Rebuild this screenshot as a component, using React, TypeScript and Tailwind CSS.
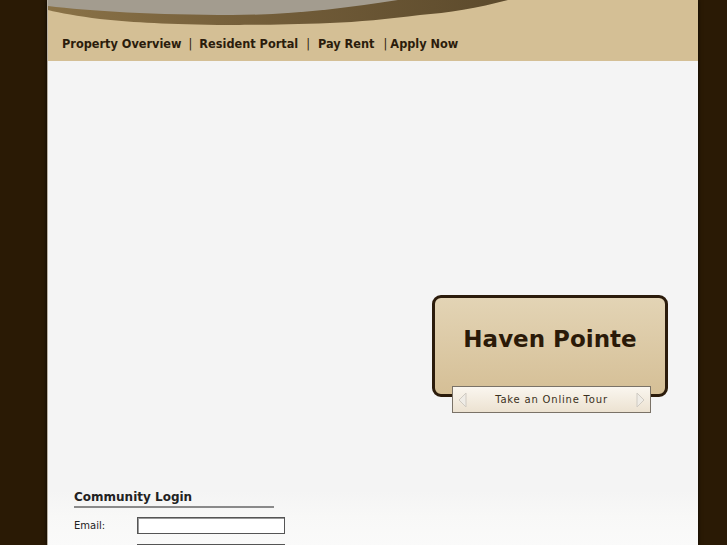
import React from 'react';

function Swoosh() {
  return (
    <svg className="absolute inset-0" width="651" height="61" viewBox="0 0 651 61">
      <defs>
        <linearGradient id="band" x1="0" x2="1" y1="0" y2="0">
          <stop offset="0" stopColor="#8a7247" />
          <stop offset="0.4" stopColor="#76603b" />
          <stop offset="1" stopColor="#5c4a2c" />
        </linearGradient>
      </defs>
      <path d="M0 0 L460 0 C430 8 400 13 372 15 C340 19 310 22 282 23 C230 25 190 25 170 25 C110 24 80 22 52 19 C30 16 12 13 0 10 Z" fill="url(#band)" />
      <path d="M0 0 L350 0 C300 8 240 15 184 15 C110 15 40 11 0 6 Z" fill="#a39c8f" />
    </svg>
  );
}

function Arrow({ dir }: { dir: 'left' | 'right' }) {
  return (
    <svg width="9" height="16" viewBox="0 0 9 16">
      <path
        d={dir === 'left' ? 'M8 1 L1 8 L8 15 Z' : 'M1 1 L8 8 L1 15 Z'}
        fill="#efece6"
        stroke="#cfcac2"
        strokeWidth="1"
      />
    </svg>
  );
}

export default function App() {
  return (
    <div className="w-[727px] h-[545px] overflow-hidden bg-[#2a1a05] flex">
      <div className="ml-[47px] w-[651px] flex flex-col border-l border-[#b8b0a2] shadow-[0_0_4px_rgba(0,0,0,0.8)]">
        {/* header */}
        <header className="relative h-[61px] bg-[#d4bf95] shrink-0">
          <Swoosh />
          <nav
            className="relative flex items-center pt-[35px] pl-[14px] text-[12.6px] font-bold text-[#2b1c0c]"
            style={{ fontFamily: '"DejaVu Sans Condensed", "DejaVu Sans", sans-serif' }}
          >
            <span>Property Overview</span>
            <span className="px-[7px] font-normal">|</span>
            <span>Resident Portal</span>
            <span className="px-[8px] font-normal">|</span>
            <span>Pay Rent</span>
            <span className="pl-[9px] pr-[3px] font-normal">|</span>
            <span>Apply Now</span>
          </nav>
        </header>

        {/* main */}
        <main className="flex-1 bg-[linear-gradient(to_bottom,#f4f4f4_0%,#f4f4f4_86%,#f8f8f7_91%,#fbfbfb_100%)]">
          <div className="pt-[234px] pl-[384px]">
            <div className="w-[236px]">
              <div className="h-[102px] rounded-[9px] border-[3px] border-[#2b1b0b] bg-[linear-gradient(to_bottom,#e3d4b5,#d5bf96)] flex items-start justify-center pt-[24px]">
                <span
                  className="text-[23px] font-bold text-[#2b1a08]"
                  style={{ fontFamily: '"DejaVu Sans", sans-serif' }}
                >
                  Haven Pointe
                </span>
              </div>
              <div className="relative -mt-[11px] ml-[20px] w-[199px] h-[27px] border border-[#7a7267] bg-[linear-gradient(to_bottom,#faf6ef,#ece2d1)] flex items-center justify-between px-[5px]">
                <Arrow dir="left" />
                <span
                  className="text-[10px] tracking-[0.8px] text-[#3a3020]"
                  style={{ fontFamily: '"DejaVu Sans", sans-serif' }}
                >
                  Take an Online Tour
                </span>
                <Arrow dir="right" />
              </div>
            </div>
          </div>

          <section
            className="pt-[77px] pl-[26px] text-[#222]"
            style={{ fontFamily: '"DejaVu Sans", sans-serif' }}
          >
            <h2 className="w-[200px] text-[12px] font-bold leading-[14px] pb-[2px] border-b-2 border-[#8a8a8a]">
              Community Login
            </h2>
            <div className="flex items-center mt-[9px] text-[10px]">
              <label className="w-[63px]">Email:</label>
              <input className="w-[148px] h-[17px] border border-[#555] shadow-[inset_1px_1px_0_#999] bg-white" />
            </div>
            <div className="flex items-center mt-[10px] text-[10px]">
              <span className="w-[63px]" />
              <input className="w-[148px] h-[17px] border border-[#555] shadow-[inset_1px_1px_0_#999] bg-white" />
            </div>
          </section>
        </main>
      </div>
    </div>
  );
}
